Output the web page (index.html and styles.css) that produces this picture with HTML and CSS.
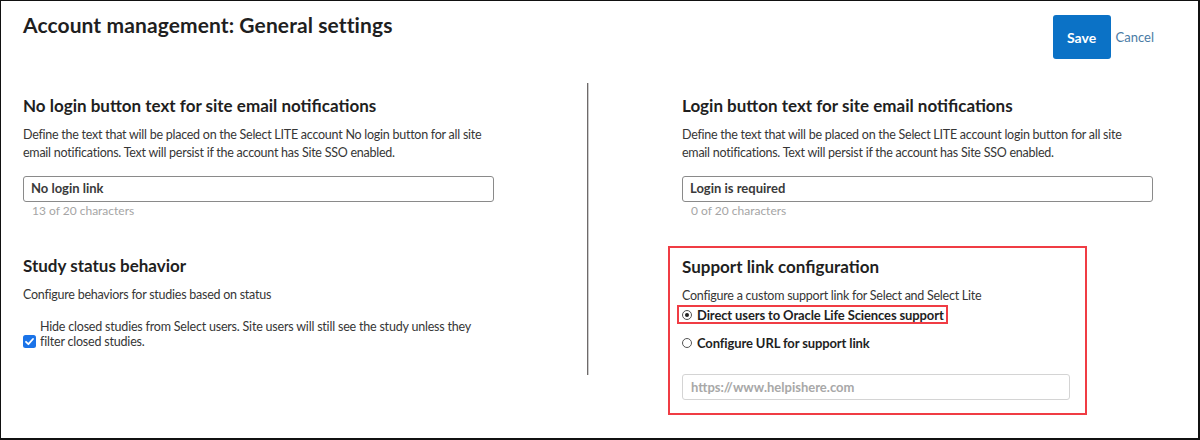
FILE: index.html
```html
<!DOCTYPE html>
<html lang="en">
<head>
<meta charset="utf-8">
<title>Account management: General settings</title>
<link rel="stylesheet" href="styles.css">
</head>
<body>
<div class="frame">
  <header class="header">
    <h1 class="title">Account management: General settings</h1>
    <div class="actions">
      <button class="btn-save" type="button">Save</button>
      <a class="link-cancel" href="#">Cancel</a>
    </div>
  </header>
  <div class="columns">
    <div class="col col-left">
      <section class="section">
        <h2 class="section-title">No login button text for site email notifications</h2>
        <p class="desc">Define the text that will be placed on the Select LITE account No login button for all site email notifications. Text will persist if the account has Site SSO enabled.</p>
        <div class="field">
          <div class="input">No login link</div>
          <div class="count">13 of 20 characters</div>
        </div>
      </section>
      <section class="section section-second">
        <h2 class="section-title">Study status behavior</h2>
        <p class="desc">Configure behaviors for studies based on status</p>
        <label class="check-row">
          <span class="checkbox">
            <svg viewBox="0 0 13 13" width="13" height="13"><rect x="0" y="0" width="13" height="13" rx="2.5" fill="#1a73e8"/><path d="M3 6.8 L5.4 9.2 L10 4" fill="none" stroke="#fff" stroke-width="1.8" stroke-linecap="round" stroke-linejoin="round"/></svg>
          </span>
          <span class="check-text">Hide closed studies from Select users. Site users will still see the study unless they filter closed studies.</span>
        </label>
      </section>
    </div>
    <div class="divider"></div>
    <div class="col col-right">
      <section class="section pad-right">
        <h2 class="section-title">Login button text for site email notifications</h2>
        <p class="desc desc-narrow">Define the text that will be placed on the Select LITE account login button for all site email notifications. Text will persist if the account has Site SSO enabled.</p>
        <div class="field">
          <div class="input">Login is required</div>
          <div class="count">0 of 20 characters</div>
        </div>
      </section>
      <section class="section section-support">
        <h2 class="section-title">Support link configuration</h2>
        <p class="desc">Configure a custom support link for Select and Select Lite</p>
        <div class="radio-row radio-highlight">
          <span class="radio radio-on"></span>
          <span class="radio-label">Direct users to Oracle Life Sciences support</span>
        </div>
        <div class="radio-row radio-second">
          <span class="radio"></span>
          <span class="radio-label">Configure URL for support link</span>
        </div>
        <div class="url-input">https://www.helpishere.com</div>
      </section>
    </div>
  </div>
</div>
</body>
</html>
```
FILE: styles.css
```css
* { box-sizing: border-box; }
html, body { margin: 0; padding: 0; background: #fff; }
body { font-family: Lato, "Noto Sans", sans-serif; color: #2a2a2a; }

.frame {
  width: 1200px;
  height: 440px;
  border: 1px solid #111;
  border-right-width: 2px;
  border-bottom-width: 2px;
  overflow: hidden;
}

.header {
  display: flex;
  justify-content: space-between;
  align-items: flex-start;
  padding: 11px 44px 0 22px;
}
.title {
  margin: 0;
  font-size: 21px;
  font-weight: 700;
  letter-spacing: 0.1px;
  line-height: 26px;
  color: #1f1f1f;
}
.actions {
  display: flex;
  align-items: center;
  gap: 5px;
  padding-top: 3px;
}
.btn-save {
  width: 58px;
  height: 44px;
  border: none;
  border-radius: 3px;
  background: #0b72c6;
  color: #fff;
  font-family: inherit;
  font-size: 14px;
  font-weight: 700;
  padding: 0;
}
.link-cancel {
  color: #4a7ba5;
  font-size: 13px;
  text-decoration: none;
}

.columns {
  display: flex;
  margin-top: 24px;
  padding-left: 22px;
}
.col { padding-top: 11px; }
.col-left { width: 488px; }
.divider {
  width: 2px;
  background: #6e6a6a;
  border-right: 1px solid #ccc;
  margin-left: 76px;
  height: 292px;
}
.col-right {
  margin-left: 79px;
  width: 488px;
}
.pad-right { padding-left: 14px; }

.section-title {
  margin: 0;
  font-size: 17px;
  font-weight: 700;
  line-height: 24px;
  color: #1f1f1f;
}
.desc {
  margin: 8px 0 0;
  font-size: 12.5px;
  letter-spacing: -0.25px;
  line-height: 18px;
  color: #363636;
}
.desc-narrow { max-width: 445px; }
.field { margin-top: 14px; }
.input {
  width: 471px;
  height: 26px;
  border: 1px solid #8a8a8a;
  border-radius: 3px;
  padding: 0 7px;
  font-size: 13px;
  font-weight: 700;
  line-height: 23px;
  color: #3a3a3a;
}
.count {
  margin-top: 1px;
  padding-left: 9px;
  font-size: 12px;
  line-height: 16px;
  color: #a5a5a5;
}

.section-second { margin-top: 35px; }
.check-row {
  display: flex;
  align-items: flex-end;
  gap: 4px;
  margin-top: 15px;
}
.checkbox { display: block; width: 13px; height: 13px; margin-bottom: 1px; }
.checkbox svg { display: block; }
.check-text {
  font-size: 12.5px;
  letter-spacing: -0.2px;
  line-height: 15px;
  color: #363636;
  width: 450px;
}

.section-support {
  margin-top: 27px;
  border: 2px solid #f03c44;
  width: 419px;
  padding: 7px 12px 13px 12px;
}
.radio-row {
  display: flex;
  align-items: center;
  gap: 5px;
  font-size: 13px;
  font-weight: 700;
  letter-spacing: -0.12px;
  line-height: 16px;
  white-space: nowrap;
  color: #1f1f1f;
}
.radio-highlight {
  border: 2px solid #f03c44;
  margin-top: 0;
  margin-left: -5px;
  padding: 0 4px 0 3px;
  width: 271px;
  height: 19px;
}
.radio-second { margin-top: 11px; }
.radio {
  width: 10px;
  height: 10px;
  border: 1px solid #555;
  border-radius: 50%;
  display: block;
  position: relative;
  flex: none;
}
.radio-on::after {
  content: "";
  position: absolute;
  left: 2px;
  top: 2px;
  width: 4px;
  height: 4px;
  border-radius: 50%;
  background: #222;
}
.url-input {
  margin-top: 23px;
  width: 388px;
  height: 26px;
  border: 1px solid #d4d4d4;
  border-radius: 3px;
  padding: 0 8px;
  font-size: 13px;
  font-weight: 700;
  line-height: 24px;
  color: #a8a8a8;
}
```
